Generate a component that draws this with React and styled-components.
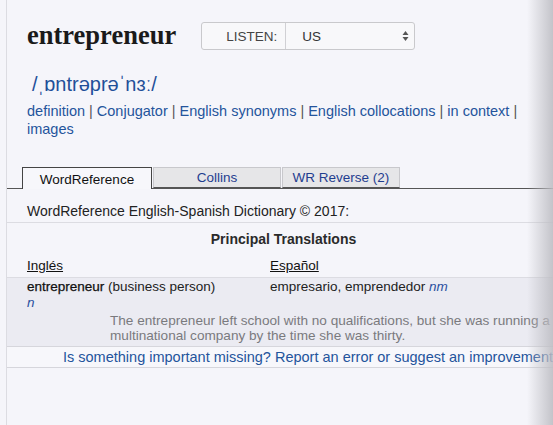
import React from "react";
import styled, { createGlobalStyle } from "styled-components";

const Global = createGlobalStyle`
  html, body { margin: 0; padding: 0; background: #f5f5fa; overflow: hidden; }
  body { font-family: "Liberation Sans", Arial, sans-serif; }
`;

const Page = styled.div`
  position: relative;
  width: 553px;
  height: 425px;
  overflow: hidden;
  background: #f5f5fa;
`;

const Frame = styled.div`
  margin-left: 6px;
  border-left: 1px solid #dcdce2;
  height: 100%;
`;

const Content = styled.div`
  padding-left: 20px;
  padding-top: 19px;
`;

const Header = styled.div`
  display: flex;
  align-items: center;
  gap: 25px;
`;

const Title = styled.h1`
  margin: 0;
  font-family: "Liberation Serif", "Times New Roman", serif;
  font-weight: bold;
  font-size: 26.5px;
  line-height: 32px;
  color: #1a1a1a;
`;

const Select = styled.div`
  display: flex;
  width: 214px;
  height: 28px;
  box-sizing: border-box;
  border: 1px solid #c9c9cc;
  border-radius: 3px;
  background: #f8f8fa;
  font-size: 13.5px;
  color: #333;
  margin-top: 2px;
`;

const SelectLabel = styled.div`
  width: 75px;
  padding-right: 8px;
  display: flex;
  align-items: center;
  justify-content: flex-end;
  border-right: 1px solid #d0d0d4;
  color: #444;
`;

const SelectValue = styled.div`
  flex: 1;
  display: flex;
  align-items: center;
  justify-content: space-between;
  padding-left: 16px;
  padding-right: 5px;
`;

const Phonetic = styled.div`
  margin-top: 21px;
  margin-left: 5px;
  font-size: 20px;
  line-height: 24px;
  color: #1f4f99;
`;

const Links = styled.div`
  margin-top: 6px;
  font-size: 14.5px;
  line-height: 18px;
  color: #24549c;
  padding-right: 20px;
`;

const Sep = styled.span`
  color: #555;
  margin: 0 4px;
`;

const Tabs = styled.div`
  margin-top: 29px;
  margin-left: -20px;
  padding-left: 15px;
  display: flex;
  align-items: flex-end;
  border-bottom: 1px solid #555;
  height: 21px;
`;

const Tab = styled.div`
  box-sizing: border-box;
  width: ${(p) => p.$w}px;
  height: ${(p) => (p.$active ? 22 : 21)}px;
  margin-bottom: ${(p) => (p.$active ? -1 : 0)}px;
  margin-right: ${(p) => p.$mr || 0}px;
  display: flex;
  align-items: center;
  justify-content: center;
  font-size: 13.5px;
  color: ${(p) => (p.$active ? "#111" : "#1f3d8f")};
  background: ${(p) => (p.$active ? "#f7f7fb" : "#e6e6e8")};
  border: 1px solid ${(p) => (p.$active ? "#444" : "#c8c8cc")};
  border-bottom: ${(p) => (p.$active ? "none" : "1px solid #555")};
  padding-top: ${(p) => (p.$active ? 2 : 0)}px;
`;

const DictLine = styled.div`
  margin-left: -20px;
  padding: 14px 0 2px 20px;
  font-size: 14px;
  line-height: 17px;
  color: #222;
  border-bottom: 1px solid #dcdce2;
`;

const Table = styled.div`
  margin-left: -20px;
`;

const Heading = styled.div`
  text-align: center;
  font-size: 14px;
  font-weight: bold;
  color: #2a2a2a;
  padding-top: 8px;
  line-height: 17px;
  padding-left: 7px;
`;

const Grid = styled.div`
  display: grid;
  grid-template-columns: 243px 1fr;
  padding-left: 20px;
`;

const ColHead = styled.div`
  font-size: 13.5px;
  text-decoration: underline;
  color: #111;
  padding-top: 10px;
  padding-bottom: 3px;
  line-height: 16px;
`;

const HeadRow = styled(Grid)`
  border-bottom: 1px solid #dcdce2;
`;

const EntryBlock = styled.div`
  background: #ebebf2;
  padding-bottom: 3px;
  border-bottom: 1px solid #d6d6dc;
`;

const Cell = styled.div`
  font-size: 13.5px;
  line-height: 16px;
  color: #222;
  padding-top: 1px;
`;

const Head = styled.span`
  color: #111;
  -webkit-text-stroke: 0.25px #111;
`;

const Pos = styled.i`
  color: #2a4fa0;
`;

const Example = styled.div`
  padding-left: 103px;
  margin-top: 2px;
  font-size: 13.6px;
  line-height: 15px;
  color: #7a7a7e;
  white-space: nowrap;
`;

const Report = styled.div`
  padding: 2px 0 1px 56px;
  font-size: 14.5px;
  line-height: 17px;
  color: #24549c;
  white-space: nowrap;
  border-bottom: 1px solid #d6d6dc;
  background: #f7f7fb;
`;

const Shade = styled.div`
  position: absolute;
  top: 0;
  right: 0;
  width: 26px;
  height: 100%;
  background: linear-gradient(to right, rgba(200, 200, 206, 0), rgba(190, 190, 196, 0.9));
  pointer-events: none;
`;

const Arrows = () => (
  <svg width="7" height="12" viewBox="0 0 7 12">
    <path d="M3.5 1 L6.5 5 H0.5 Z" fill="#555" />
    <path d="M3.5 11 L6.5 7 H0.5 Z" fill="#555" />
  </svg>
);

export default function App() {
  return (
    <>
      <Global />
      <Page>
        <Frame>
          <Content>
            <Header>
              <Title>entrepreneur</Title>
              <Select>
                <SelectLabel>LISTEN:</SelectLabel>
                <SelectValue>
                  <span>US</span>
                  <Arrows />
                </SelectValue>
              </Select>
            </Header>
            <Phonetic>/ˌɒntrəprəˈnɜː/</Phonetic>
            <Links>
              definition<Sep>|</Sep>Conjugator<Sep>|</Sep>English synonyms<Sep>|</Sep>English collocations<Sep>|</Sep>in context<Sep>|</Sep> images
            </Links>
            <Tabs>
              <Tab $w={130} $active $mr={1}>WordReference</Tab>
              <Tab $w={128} $mr={1}>Collins</Tab>
              <Tab $w={118}>WR Reverse (2)</Tab>
            </Tabs>
            <DictLine>WordReference English-Spanish Dictionary © 2017:</DictLine>
            <Table>
              <Heading>Principal Translations</Heading>
              <HeadRow>
                <ColHead>Inglés</ColHead>
                <ColHead>Español</ColHead>
              </HeadRow>
              <EntryBlock>
                <Grid>
                  <Cell>
                    <Head>entrepreneur</Head> (business person)
                    <br />
                    <Pos>n</Pos>
                  </Cell>
                  <Cell>
                    empresario, emprendedor <Pos>nm</Pos>
                  </Cell>
                </Grid>
                <Example>
                  The entrepreneur left school with no qualifications, but she was running a
                  <br />
                  multinational company by the time she was thirty.
                </Example>
              </EntryBlock>
              <Report>Is something important missing? Report an error or suggest an improvement</Report>
            </Table>
          </Content>
        </Frame>
        <Shade />
      </Page>
    </>
  );
}
